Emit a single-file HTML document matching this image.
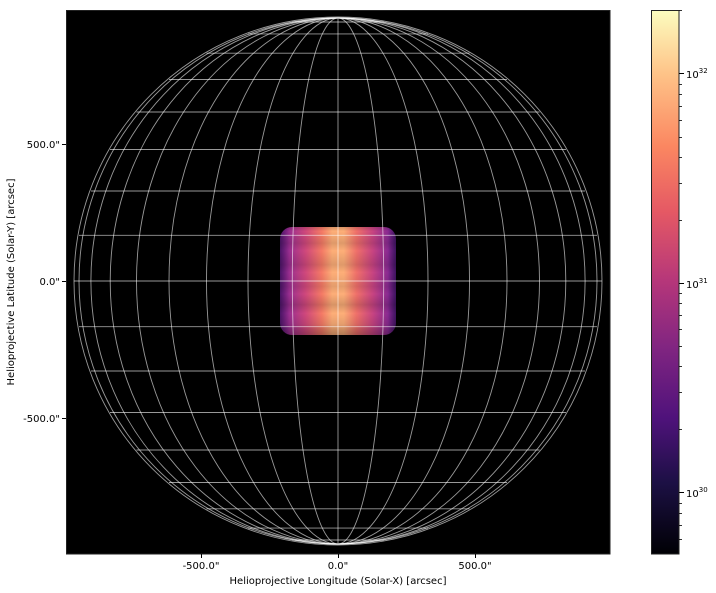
<!DOCTYPE html>
<html><head><style>
html,body{margin:0;padding:0;background:#fff;}
svg{display:block;font-family:"DejaVu Sans","Liberation Sans",sans-serif;}
</style></head><body>
<svg width="716" height="593" viewBox="0 0 716 593" xmlns="http://www.w3.org/2000/svg">
<defs>
<linearGradient id="magma" x1="0" y1="1" x2="0" y2="0">
<stop offset="0" stop-color="#000004"/>
<stop offset="0.13" stop-color="#1c1044"/>
<stop offset="0.25" stop-color="#4f127b"/>
<stop offset="0.38" stop-color="#812581"/>
<stop offset="0.5" stop-color="#b5367a"/>
<stop offset="0.63" stop-color="#e55964"/>
<stop offset="0.75" stop-color="#fb8761"/>
<stop offset="0.88" stop-color="#fec287"/>
<stop offset="1" stop-color="#fcfdbf"/>
</linearGradient>
<linearGradient id="blob" x1="0" y1="0" x2="1" y2="0">
<stop offset="0" stop-color="#6a1c90" stop-opacity="0.7"/>
<stop offset="0.08" stop-color="#9a2e90"/>
<stop offset="0.22" stop-color="#d0487c"/>
<stop offset="0.36" stop-color="#f57a66"/>
<stop offset="0.45" stop-color="#fdae78"/>
<stop offset="0.55" stop-color="#fdae78"/>
<stop offset="0.66" stop-color="#f0706a"/>
<stop offset="0.8" stop-color="#c84482"/>
<stop offset="0.93" stop-color="#8a2a92"/>
<stop offset="1" stop-color="#5a1a88" stop-opacity="0.7"/>
</linearGradient>
<linearGradient id="bands" x1="0" y1="0" x2="0" y2="1">
<stop offset="0" stop-color="#000" stop-opacity="0.15"/>
<stop offset="0.04" stop-color="#000" stop-opacity="0"/>
<stop offset="0.15" stop-color="#000" stop-opacity="0.12"/>
<stop offset="0.22" stop-color="#000" stop-opacity="0"/>
<stop offset="0.35" stop-color="#000" stop-opacity="0.12"/>
<stop offset="0.42" stop-color="#000" stop-opacity="0"/>
<stop offset="0.55" stop-color="#000" stop-opacity="0.1"/>
<stop offset="0.62" stop-color="#000" stop-opacity="0"/>
<stop offset="0.72" stop-color="#000" stop-opacity="0.15"/>
<stop offset="0.8" stop-color="#000" stop-opacity="0"/>
<stop offset="0.9" stop-color="#000" stop-opacity="0.1"/>
<stop offset="1" stop-color="#000" stop-opacity="0.3"/>
</linearGradient>
</defs>
<rect x="66" y="10" width="544" height="544" fill="#000"/>
<rect x="280" y="227" width="116" height="108" rx="12" fill="url(#blob)"/>
<rect x="280" y="227" width="116" height="108" rx="12" fill="url(#bands)"/>
<g fill="none" stroke="#fff" stroke-opacity="0.6" stroke-width="0.9">
<ellipse cx="338" cy="281" rx="45.7" ry="263"/>
<ellipse cx="338" cy="281" rx="90" ry="263"/>
<ellipse cx="338" cy="281" rx="131.5" ry="263"/>
<ellipse cx="338" cy="281" rx="169" ry="263"/>
<ellipse cx="338" cy="281" rx="201.5" ry="263"/>
<ellipse cx="338" cy="281" rx="227.8" ry="263"/>
<ellipse cx="338" cy="281" rx="247.1" ry="263"/>
<ellipse cx="338" cy="281" rx="259" ry="263"/>
<ellipse cx="338" cy="281" rx="264" ry="264"/>
<line x1="338" y1="18" x2="338" y2="544"/>
<line x1="74" y1="281" x2="602" y2="281"/>
<line x1="79" y1="235.3" x2="597" y2="235.3"/><line x1="79" y1="326.7" x2="597" y2="326.7"/>
<line x1="91" y1="191" x2="585" y2="191"/><line x1="91" y1="371" x2="585" y2="371"/>
<line x1="110" y1="149.5" x2="566" y2="149.5"/><line x1="110" y1="412.5" x2="566" y2="412.5"/>
<line x1="136.5" y1="112" x2="539.5" y2="112"/><line x1="136.5" y1="450" x2="539.5" y2="450"/>
<line x1="169" y1="79.5" x2="507" y2="79.5"/><line x1="169" y1="482.5" x2="507" y2="482.5"/>
<line x1="206.5" y1="53.2" x2="469.5" y2="53.2"/><line x1="206.5" y1="508.8" x2="469.5" y2="508.8"/>
<line x1="248" y1="33.9" x2="428" y2="33.9"/><line x1="248" y1="528.1" x2="428" y2="528.1"/>
<line x1="292.3" y1="22" x2="383.7" y2="22"/><line x1="292.3" y1="540" x2="383.7" y2="540"/>
</g>
<rect x="66.5" y="10.5" width="543.5" height="543.5" fill="none" stroke="#222" stroke-width="1"/>
<g stroke="#000" stroke-width="1">
<line x1="62" y1="144.5" x2="66" y2="144.5"/><line x1="62" y1="281.5" x2="66" y2="281.5"/><line x1="62" y1="418.5" x2="66" y2="418.5"/>
<line x1="201.5" y1="554" x2="201.5" y2="558"/><line x1="338.5" y1="554" x2="338.5" y2="558"/><line x1="475.5" y1="554" x2="475.5" y2="558"/>
</g>
<g font-size="10" fill="#000">
<text x="60" y="148" text-anchor="end">500.0"</text>
<text x="60" y="285" text-anchor="end">0.0"</text>
<text x="60" y="422" text-anchor="end">-500.0"</text>
<text x="201" y="569" text-anchor="middle">-500.0"</text>
<text x="338" y="569" text-anchor="middle">0.0"</text>
<text x="475" y="569" text-anchor="middle">500.0"</text>
<text x="338" y="584" text-anchor="middle">Helioprojective Longitude (Solar-X) [arcsec]</text>
<text transform="translate(14 282) rotate(-90)" text-anchor="middle">Helioprojective Latitude (Solar-Y) [arcsec]</text>
</g>
<rect x="651" y="10" width="28" height="544" fill="url(#magma)"/>
<rect x="651.5" y="10.5" width="27.5" height="543.5" fill="none" stroke="#222" stroke-width="1"/>
<g stroke="#000" stroke-width="1">
<line x1="679" y1="73.5" x2="684" y2="73.5"/>
<line x1="679" y1="283.5" x2="684" y2="283.5"/>
<line x1="679" y1="492.5" x2="684" y2="492.5"/>
</g>
<g stroke="#000" stroke-width="0.8">
<line x1="679" y1="10.5" x2="682" y2="10.5"/>
<line x1="679" y1="220.5" x2="682" y2="220.5"/><line x1="679" y1="183.5" x2="682" y2="183.5"/><line x1="679" y1="157.5" x2="682" y2="157.5"/><line x1="679" y1="137.5" x2="682" y2="137.5"/><line x1="679" y1="120.5" x2="682" y2="120.5"/><line x1="679" y1="106.5" x2="682" y2="106.5"/><line x1="679" y1="94.5" x2="682" y2="94.5"/><line x1="679" y1="84.5" x2="682" y2="84.5"/>
<line x1="679" y1="429.5" x2="682" y2="429.5"/><line x1="679" y1="392.5" x2="682" y2="392.5"/><line x1="679" y1="366.5" x2="682" y2="366.5"/><line x1="679" y1="346.5" x2="682" y2="346.5"/><line x1="679" y1="329.5" x2="682" y2="329.5"/><line x1="679" y1="315.5" x2="682" y2="315.5"/><line x1="679" y1="303.5" x2="682" y2="303.5"/><line x1="679" y1="293.5" x2="682" y2="293.5"/>
<line x1="679" y1="539.5" x2="682" y2="539.5"/><line x1="679" y1="525.5" x2="682" y2="525.5"/><line x1="679" y1="513.5" x2="682" y2="513.5"/><line x1="679" y1="503.5" x2="682" y2="503.5"/>
</g>
<g font-size="10" fill="#000">
<text x="686" y="78">10<tspan font-size="7" dy="-5">32</tspan></text>
<text x="686" y="288">10<tspan font-size="7" dy="-5">31</tspan></text>
<text x="686" y="497">10<tspan font-size="7" dy="-5">30</tspan></text>
</g>
</svg>
</body></html>
